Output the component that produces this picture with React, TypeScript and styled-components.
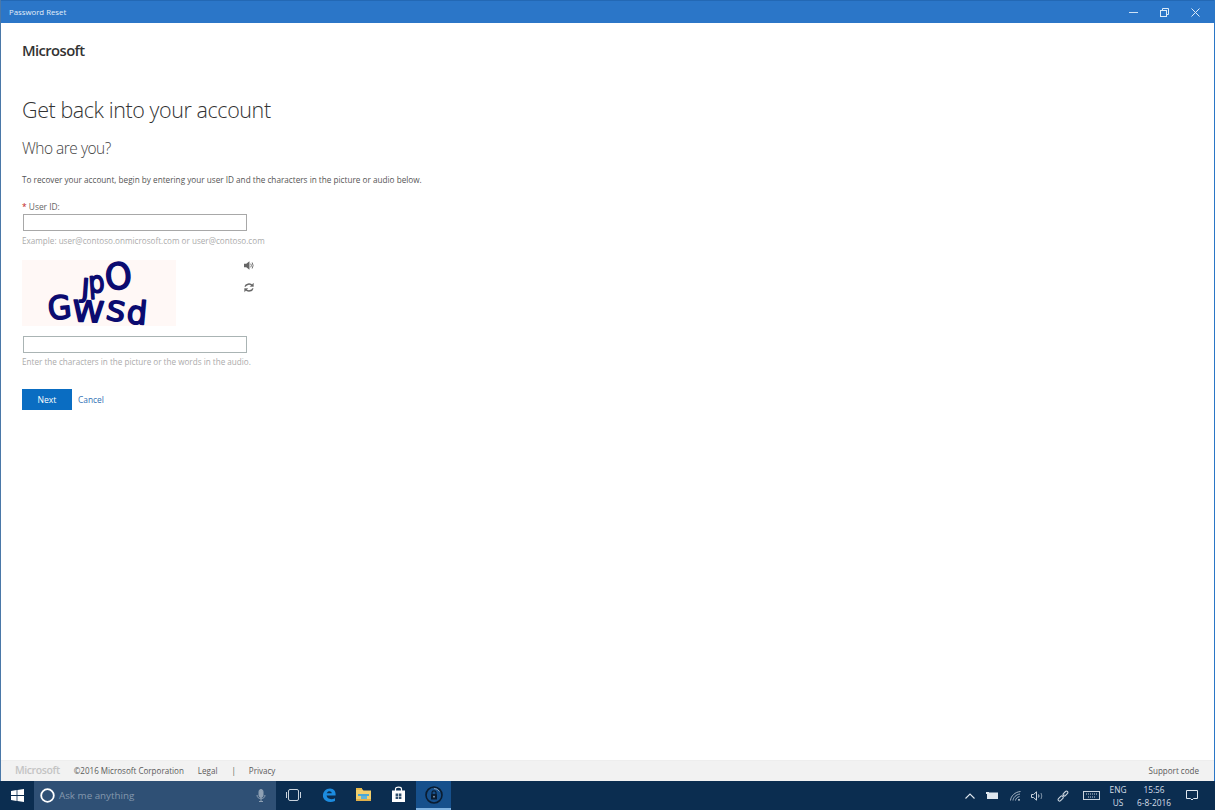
import { FC } from "react"
import styled, { createGlobalStyle } from "styled-components"

const GlobalStyle = createGlobalStyle`
  html, body {
    margin: 0;
    padding: 0;
    height: 100%;
    overflow: hidden;
  }
  body {
    font-family: "Open Sans", "Noto Sans", "Liberation Sans", sans-serif;
    background: #ffffff;
  }
`

const Screen = styled.div`
  width: 1215px;
  height: 810px;
  display: flex;
  flex-direction: column;
`

const Window = styled.div`
  flex: 1;
  min-height: 0;
  display: flex;
  flex-direction: column;
  border-left: 1px solid #4a78a8;
  border-right: 1px solid #2a76c6;
`

const TitleBar = styled.div`
  height: 23px;
  flex: none;
  display: flex;
  align-items: center;
  justify-content: space-between;
  background: #2b76c8;
  border-top: 1px solid #2368b4;
  box-sizing: border-box;
  padding-left: 8px;
  color: #e4effa;
  font-size: 7.8px;
`

const WindowControls = styled.div`
  display: flex;
  align-items: center;
  padding-right: 3px;
`

const WindowControl = styled.div`
  width: 31px;
  height: 22px;
  display: flex;
  align-items: center;
  justify-content: center;
`

const Content = styled.main`
  flex: 1;
  min-height: 0;
  padding: 19px 0 0 21px;
  background: #ffffff;
`

const Logo = styled.div`
  font-size: 14.8px;
  line-height: 16px;
  font-weight: 600;
  letter-spacing: -0.6px;
  color: #333333;
`

const Heading = styled.h1`
  margin: 37px 0 0;
  font-size: 21.5px;
  line-height: 30px;
  font-weight: 300;
  letter-spacing: -0.42px;
  color: #333333;
`

const SubHeading = styled.h2`
  margin: 12px 0 0;
  font-size: 15.5px;
  line-height: 22px;
  font-weight: 300;
  letter-spacing: -0.5px;
  color: #444444;
`

const Intro = styled.p`
  margin: 14px 0 0;
  font-size: 8.2px;
  line-height: 13px;
  color: #555555;
`

const FieldLabel = styled.label`
  display: block;
  margin-top: 15px;
  font-size: 8.4px;
  line-height: 12px;
  color: #666666;
`

const Required = styled.span`
  color: #c01818;
`

const TextField = styled.input`
  display: block;
  box-sizing: border-box;
  width: 224px;
  height: 17px;
  margin: 1px 0 0 1px;
  padding: 0;
  background: #ffffff;
  border: 1px solid #a8a8a8;
  outline: none;
`

const Hint = styled.div`
  margin-top: 4px;
  font-size: 8.13px;
  line-height: 12px;
  color: #ababab;
`

const CaptchaHint = styled(Hint)`
  margin-top: 3px;
`

const CaptchaRow = styled.div`
  display: flex;
  margin-top: 13px;
`

const CaptchaImage = styled.svg`
  display: block;
  flex: none;
  width: 154px;
  height: 66px;
  overflow: visible;
`

const CaptchaTools = styled.div`
  display: flex;
  flex-direction: column;
  gap: 11px;
  margin: 0 0 0 68px;
`

const CaptchaField = styled(TextField)`
  margin-top: 10px;
  border-color: #aab4b4;
`

const Actions = styled.div`
  display: flex;
  align-items: center;
  gap: 6px;
  margin-top: 21px;
`

const PrimaryButton = styled.button`
  width: 50px;
  height: 21px;
  padding: 0;
  border: none;
  background: #0a6dc2;
  color: #ffffff;
  font: inherit;
  font-size: 8.6px;
`

const TextLink = styled.a`
  font-size: 8.4px;
  color: #2f6fb4;
`

const Footer = styled.footer`
  height: 21px;
  flex: none;
  display: flex;
  align-items: center;
  padding: 0 15px 2px 14px;
  background: #f2f2f2;
  border-top: 1px solid #eeeeee;
  box-sizing: border-box;
  color: #5a5a5a;
  font-size: 8.05px;
`

const FooterLogo = styled.span`
  font-size: 10.5px;
  font-weight: 600;
  letter-spacing: -0.4px;
  color: #c4c4c4;
  margin-right: 14px;
`

const FooterItem = styled.span<{ $gap?: number }>`
  margin-right: ${({ $gap }) => $gap ?? 14}px;
`

const FooterEnd = styled.span`
  margin-left: auto;
`

const Taskbar = styled.div`
  height: 29px;
  flex: none;
  display: flex;
  align-items: stretch;
  background: #0b2d50;
  color: #dfe7ef;
`

const StartButton = styled.div`
  width: 34px;
  flex: none;
  display: flex;
  align-items: center;
  justify-content: center;
`

const SearchBox = styled.div`
  width: 242px;
  flex: none;
  display: flex;
  align-items: center;
  box-sizing: border-box;
  padding: 0 10px 0 6px;
  background: #2f5075;
  color: #8498ad;
  font-size: 9.8px;
`

const SearchText = styled.span`
  flex: 1;
  margin-left: 4px;
`

const TaskButton = styled.div<{ $active?: boolean }>`
  width: 35px;
  flex: none;
  display: flex;
  align-items: center;
  justify-content: center;
  box-sizing: border-box;
  background: ${({ $active }) => ($active ? "#16508c" : "transparent")};
  border-bottom: 2px solid ${({ $active }) => ($active ? "#7fb2e0" : "transparent")};
`

const Tray = styled.div`
  margin-left: auto;
  display: flex;
  align-items: center;
  padding-right: 7px;
`

const TrayIcon = styled.div<{ $width: number }>`
  width: ${({ $width }) => $width}px;
  height: 100%;
  display: flex;
  align-items: center;
  justify-content: center;
`

const TrayText = styled.div<{ $width: number }>`
  width: ${({ $width }) => $width}px;
  text-align: center;
  font-size: 8.3px;
  line-height: 13px;
  color: #d5dee8;
`

const captchaLetters = [
  { ch: "J", x: 59, y: 37, size: 26, rot: 4, sx: 1 },
  { ch: "p", x: 67, y: 33, size: 30, rot: -4, sx: 0.85 },
  { ch: "O", x: 84, y: 30, size: 36, rot: -5, sx: 0.95 },
  { ch: "G", x: 27, y: 60, size: 32, rot: -6, sx: 0.95 },
  { ch: "W", x: 50, y: 61, size: 29, rot: 3, sx: 1.1 },
  { ch: "S", x: 83, y: 59, size: 27, rot: 10, sx: 1.1 },
  { ch: "d", x: 104, y: 63, size: 32, rot: 5, sx: 1 },
]

const WindowsLogo = () => (
  <svg width="13" height="13" viewBox="0 0 13 13" fill="#ffffff">
    <path d="M0 2 L5.6 1.1 V6.1 H0 Z M6.4 1 L13 0 V6.1 H6.4 Z M0 6.9 H5.6 V11.9 L0 11 Z M6.4 6.9 H13 V13 L6.4 12 Z" />
  </svg>
)

const EdgeIcon = () => (
  <svg width="16" height="16" viewBox="0 0 16 16" fill="none">
    <path
      d="M2 10 C1.5 4.5 5 1.5 9 1.5 C13 1.5 15 4.5 14.6 8.6 H5.6 C5.8 12 10.5 13.2 14 11.2 V14 C9.5 16 3.5 15 2 10 Z M5.7 6.2 H10.8 C10.8 3.6 6.6 3.4 5.7 6.2 Z"
      fill="#1c8ce0"
      fillRule="evenodd"
    />
  </svg>
)

const ExplorerIcon = () => (
  <svg width="17" height="15" viewBox="0 0 17 15">
    <path d="M1 2 H7 L8.5 3.5 H16 V13.5 H1 Z" fill="#f2cf6c" />
    <rect x="1" y="1" width="6" height="2" fill="#e7b94a" />
    <rect x="6" y="8" width="6" height="5.5" fill="#5fb4d8" />
    <rect x="1" y="12" width="15" height="2" fill="#e0b04a" />
    <rect x="3" y="7" width="11" height="2" fill="#4ba6d2" />
  </svg>
)

const StoreIcon = () => (
  <svg width="15" height="17" viewBox="0 0 15 17">
    <path d="M1 4.5 H14 V16 H1 Z" fill="#ffffff" />
    <path d="M4.5 5 V3 C4.5 0.5 10.5 0.5 10.5 3 V5" fill="none" stroke="#ffffff" strokeWidth="1.2" />
    <path d="M4.6 7.5 H7.2 V9.9 H4.6 Z M7.9 7.5 H10.4 V9.9 H7.9 Z M4.6 10.5 H7.2 V12.9 H4.6 Z M7.9 10.5 H10.4 V12.9 H7.9 Z" fill="#31506f" />
  </svg>
)

const LockAppIcon = () => (
  <svg width="18" height="18" viewBox="0 0 18 18" fill="none">
    <circle cx="9" cy="9" r="8" stroke="#0a1c30" strokeWidth="1.6" />
    <path d="M9 2.5 A6.5 6.5 0 0 1 14.5 5.5" stroke="#8aa0b8" strokeWidth="1" />
    <rect x="6" y="8" width="6" height="5.5" rx="0.6" fill="#0a1c30" />
    <path d="M7 8 V6.4 C7 4.4 11 4.4 11 6.4 V8" stroke="#0a1c30" strokeWidth="1.2" />
    <circle cx="9" cy="10.7" r="0.9" fill="#8aa0b8" />
  </svg>
)

const CaptchaPicture = () => (
  <CaptchaImage viewBox="0 0 154 66">
    <rect width="154" height="66" fill="#fff8f6" />
    <g fill="#0b0b70" stroke="#0b0b70" strokeWidth="1.6" strokeLinejoin="round" fontFamily="'DejaVu Sans', sans-serif">
      {captchaLetters.map((l) => (
        <text
          key={l.ch}
          fontSize={l.size}
          transform={`translate(${l.x} ${l.y}) rotate(${l.rot}) scale(${l.sx} 1)`}
        >
          {l.ch}
        </text>
      ))}
    </g>
  </CaptchaImage>
)

const App: FC = () => (
  <Screen>
    <GlobalStyle />
    <Window>
      <TitleBar>
        Password Reset
        <WindowControls>
          <WindowControl>
            <svg width="9" height="9" viewBox="0 0 9 9">
              <rect x="0" y="4" width="9" height="1" fill="#cfe2f5" />
            </svg>
          </WindowControl>
          <WindowControl>
            <svg width="9" height="9" viewBox="0 0 9 9" fill="none" stroke="#dcebf8">
              <rect x="0.5" y="2.5" width="6" height="6" />
              <path d="M2.5 2.5 V0.5 H8.5 V6.5 H6.5" />
            </svg>
          </WindowControl>
          <WindowControl>
            <svg width="9" height="9" viewBox="0 0 9 9" stroke="#dcebf8">
              <path d="M0.5 0.5 L8.5 8.5 M8.5 0.5 L0.5 8.5" />
            </svg>
          </WindowControl>
        </WindowControls>
      </TitleBar>
      <Content>
        <Logo>Microsoft</Logo>
        <Heading>Get back into your account</Heading>
        <SubHeading>Who are you?</SubHeading>
        <Intro>
          To recover your account, begin by entering your user ID and the characters in the picture or audio below.
        </Intro>
        <FieldLabel>
          <Required>*</Required> User ID:
        </FieldLabel>
        <TextField />
        <Hint>Example: user@contoso.onmicrosoft.com or user@contoso.com</Hint>
        <CaptchaRow>
          <CaptchaPicture />
          <CaptchaTools>
            <svg width="10" height="11" viewBox="0 0 11 11" fill="#666666">
              <path d="M0 3.5 H2.5 L6 0.8 V10.2 L2.5 7.5 H0 Z" />
              <path d="M7.4 3.5 Q8.8 5.5 7.4 7.5 M9 2.2 Q11 5.5 9 8.8" fill="none" stroke="#666666" />
            </svg>
            <svg width="10" height="11" viewBox="0 0 11 11" fill="none" stroke="#666666" strokeWidth="1.6">
              <path d="M1.2 4.6 C2 1.6 6.6 0.6 9 3.4 M9.8 6.4 C9 9.4 4.4 10.4 2 7.6" />
              <path d="M10.4 0.8 V4.4 H6.8 Z M0.6 10.2 V6.6 H4.2 Z" fill="#666666" strokeWidth="0.4" />
            </svg>
          </CaptchaTools>
        </CaptchaRow>
        <CaptchaField />
        <CaptchaHint>Enter the characters in the picture or the words in the audio.</CaptchaHint>
        <Actions>
          <PrimaryButton>Next</PrimaryButton>
          <TextLink>Cancel</TextLink>
        </Actions>
      </Content>
      <Footer>
        <FooterLogo>Microsoft</FooterLogo>
        <FooterItem>©2016 Microsoft Corporation</FooterItem>
        <FooterItem>Legal</FooterItem>
        <FooterItem $gap={13}>|</FooterItem>
        <FooterItem $gap={0}>Privacy</FooterItem>
        <FooterEnd>Support code</FooterEnd>
      </Footer>
    </Window>
    <Taskbar>
      <StartButton>
        <WindowsLogo />
      </StartButton>
      <SearchBox>
        <svg width="15" height="15" viewBox="0 0 15 15" fill="none">
          <circle cx="7.5" cy="7.5" r="6.3" stroke="#ffffff" strokeWidth="1.8" />
        </svg>
        <SearchText>Ask me anything</SearchText>
        <svg width="10" height="13" viewBox="0 0 10 13" fill="none" stroke="#8fa1b4">
          <rect x="3" y="0.5" width="4" height="8" rx="2" fill="#8fa1b4" />
          <path d="M1 6 C1 11 9 11 9 6 M5 10 V12.5 M3 12.5 H7" />
        </svg>
      </SearchBox>
      <TaskButton>
        <svg width="15" height="12" viewBox="0 0 15 12" fill="none" stroke="#c9d3dd">
          <rect x="2.5" y="0.5" width="10" height="11" rx="1.5" />
          <path d="M0.5 3 V9 M14.5 3 V9" />
        </svg>
      </TaskButton>
      <TaskButton>
        <EdgeIcon />
      </TaskButton>
      <TaskButton>
        <ExplorerIcon />
      </TaskButton>
      <TaskButton>
        <StoreIcon />
      </TaskButton>
      <TaskButton $active>
        <LockAppIcon />
      </TaskButton>
      <Tray>
        <TrayIcon $width={20}>
          <svg width="10" height="6" viewBox="0 0 10 6" fill="none" stroke="#dfe7ef" strokeWidth="1.1">
            <path d="M0.5 5.5 L5 1 L9.5 5.5" />
          </svg>
        </TrayIcon>
        <TrayIcon $width={24}>
          <svg width="12" height="7" viewBox="0 0 12 7" fill="#dfe7ef">
            <rect x="1" y="0.5" width="11" height="6.5" />
            <rect x="0" y="0" width="3" height="2" />
          </svg>
        </TrayIcon>
        <TrayIcon $width={22}>
          <svg width="11" height="10" viewBox="0 0 11 10" fill="none" stroke="#b5c2cf" strokeWidth="0.9">
            <path d="M0.5 9.5 C0.8 5 5 1 10.5 0.5 M3 9.5 C3.2 6.6 6 3.5 10 3 M5.5 9.5 C5.6 8 7 6 9.5 5.6" />
            <circle cx="9" cy="8.8" r="0.9" fill="#dfe7ef" stroke="none" />
          </svg>
        </TrayIcon>
        <TrayIcon $width={22}>
          <svg width="13" height="10" viewBox="0 0 13 10" fill="none" stroke="#c9d3dd">
            <path d="M0.5 3.5 H2.5 L5.5 0.8 V9.2 L2.5 6.5 H0.5 Z" />
            <path d="M7.5 3.5 Q8.5 5 7.5 6.5" />
            <path d="M10 2 Q11.6 5 10 8" stroke="#7f93a8" />
          </svg>
        </TrayIcon>
        <TrayIcon $width={30}>
          <svg width="13" height="13" viewBox="0 0 13 13" fill="none" stroke="#c9d3dd" strokeWidth="1.1">
            <rect x="-3.2" y="-1.5" width="6" height="3" rx="1.4" transform="translate(3.8 9.4) rotate(-45)" />
            <rect x="-3" y="-1.4" width="5.6" height="2.8" rx="1.3" transform="translate(8.6 4.4) rotate(-45)" />
            <path d="M6 7 L7.4 5.6" />
          </svg>
        </TrayIcon>
        <TrayIcon $width={26}>
          <svg width="17" height="9" viewBox="0 0 17 9" fill="none" stroke="#c9d3dd">
            <rect x="0.5" y="0.5" width="16" height="8" />
            <path d="M3 3 H14 M5 6 H12" strokeDasharray="1 1" />
          </svg>
        </TrayIcon>
        <TrayText $width={28}>
          ENG
          <br />
          US
        </TrayText>
        <TrayText $width={44}>
          15:56
          <br />
          6-8-2016
        </TrayText>
        <TrayIcon $width={32}>
          <svg width="12" height="11" viewBox="0 0 12 11" fill="none" stroke="#dfe7ef">
            <path d="M0.5 0.5 H11.5 V8.5 H7.5 L6 10 L4.5 8.5 H0.5 Z" />
          </svg>
        </TrayIcon>
      </Tray>
    </Taskbar>
  </Screen>
)

export default App
